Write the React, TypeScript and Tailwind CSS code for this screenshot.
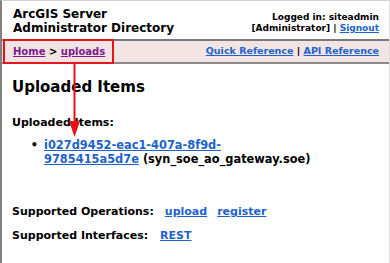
import React from 'react';

const font = { fontFamily: '"DejaVu Sans", Verdana, sans-serif' };

const A: React.FC<{ children: React.ReactNode; visited?: boolean }> = ({ children, visited }) => (
  <a href="#" className={`underline font-bold ${visited ? 'text-[#7d1a8c]' : 'text-[#1d63c9]'}`}>
    {children}
  </a>
);

export default function App() {
  return (
    <div
      style={font}
      className="relative w-[390px] h-[263px] overflow-hidden bg-white border-l-2 border-l-[#808080] border-r border-r-[#dcdcdc] border-t border-t-[#d0d0d0] text-black"
    >
      {/* header */}
      <div className="h-[40px] flex justify-between pl-[11px] pr-[10px] border-b-2 border-[#7a7a7a]">
        <div className="pt-[6px] text-[12px] leading-[14px] font-bold">
          ArcGIS Server
          <br />
          Administrator Directory
        </div>
        <div className="pt-[11px] text-[9px] leading-[11px] font-bold text-right">
          Logged in: siteadmin
          <br />
          [Administrator] | <A>Signout</A>
        </div>
      </div>

      {/* breadcrumb */}
      <div className="h-[23px] flex items-center justify-between pl-[11px] pr-[10px] bg-[#f3e4e4] border-b-2 border-[#8a8a8a]">
        <div className="text-[10px] font-bold">
          <A visited>Home</A> &gt; <A visited>uploads</A>
        </div>
        <div className="text-[9.5px] font-bold">
          <A>Quick Reference</A> | <A>API Reference</A>
        </div>
      </div>

      {/* content */}
      <div className="pl-[10px]">
        <h1 className="mt-[14px] text-[15px] leading-[18px] font-bold">Uploaded Items</h1>
        <h2 className="mt-[20px] text-[11px] leading-[14px] font-bold">Uploaded Items:</h2>
        <ul className="mt-[8px] text-[11.4px] leading-[14px] font-bold">
          <li className="flex">
            <span className="w-[32px] text-right pr-[6px]">•</span>
            <span>
              <A>
                i027d9452-eac1-407a-8f9d-
                <br />
                9785415a5d7e
              </A>{' '}
              (syn_soe_ao_gateway.soe)
            </span>
          </li>
        </ul>
        <div className="mt-[39px] text-[11px] leading-[14px] font-bold flex">
          <span>Supported Operations:</span>
          <span className="ml-[11px]"><A>upload</A></span>
          <span className="ml-[10px]"><A>register</A></span>
        </div>
        <div className="mt-[10px] text-[11px] leading-[14px] font-bold flex">
          <span>Supported Interfaces:</span>
          <span className="ml-[12px]"><A>REST</A></span>
        </div>
      </div>

      {/* annotation */}
      <div className="absolute left-[1px] top-[38px] w-[111px] h-[25px] border-2 border-[#e8141c]" />
      <svg className="absolute left-[65px] top-[63px]" width="16" height="78" viewBox="0 0 16 78">
        <line x1="7.5" y1="0" x2="7.5" y2="62" stroke="#e8141c" strokeWidth="2" />
        <polygon points="2,57 13,57 7.5,73" fill="#e8141c" />
      </svg>
    </div>
  );
}
